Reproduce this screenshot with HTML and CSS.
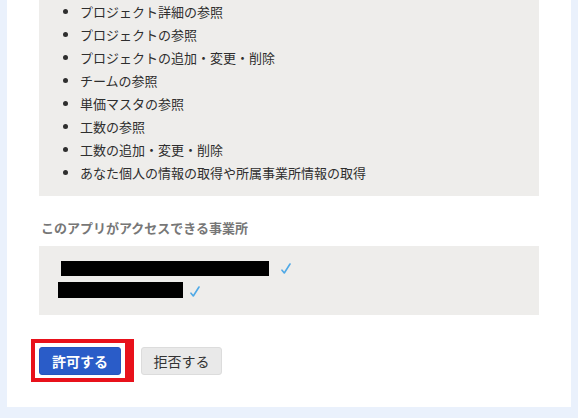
FILE: index.html
```html
<!DOCTYPE html>
<html lang="ja">
<head>
<meta charset="utf-8">
<link rel="stylesheet" href="styles.css">
</head>
<body>
<div class="card">
  <div class="scope-box">
    <ul class="scope-list">
      <li>プロジェクト詳細の参照</li>
      <li>プロジェクトの参照</li>
      <li>プロジェクトの追加・変更・削除</li>
      <li>チームの参照</li>
      <li>単価マスタの参照</li>
      <li>工数の参照</li>
      <li>工数の追加・変更・削除</li>
      <li>あなた個人の情報の取得や所属事業所情報の取得</li>
    </ul>
  </div>
  <h3 class="section-title">このアプリがアクセスできる事業所</h3>
  <div class="office-box">
    <div class="office-row row-a">
      <span class="redact redact-a"></span>
      <svg class="check check-a" width="10" height="11" viewBox="0 0 10 11"><path d="M1 7.2 L3.3 10 L9 1" fill="none" stroke="#4fa9e6" stroke-width="1.6" stroke-linecap="round" stroke-linejoin="round"/></svg>
    </div>
    <div class="office-row row-b">
      <span class="redact redact-b"></span>
      <svg class="check check-b" width="10" height="11" viewBox="0 0 10 11"><path d="M1 7.2 L3.3 10 L9 1" fill="none" stroke="#4fa9e6" stroke-width="1.6" stroke-linecap="round" stroke-linejoin="round"/></svg>
    </div>
  </div>
  <div class="actions">
    <div class="highlight">
      <button class="btn btn-primary">許可する</button>
    </div>
    <button class="btn btn-secondary">拒否する</button>
  </div>
</div>
</body>
</html>
```

FILE: styles.css
```css
html, body {
  margin: 0;
  padding: 0;
}
body {
  background: #eaf1fc;
  font-family: "Noto Sans CJK JP", "Noto Sans", sans-serif;
  font-size: 13px;
  color: #2e2e2e;
  height: 418px;
  overflow: hidden;
}
.card {
  margin-left: 7px;
  width: 500px;
  background: #fff;
  padding: 0 32px 25px 32px;
}
.scope-box {
  background: #eeedeb;
  padding: 1px 0 12px 0;
}
.scope-list {
  margin: -1px 0 0 0;
  padding: 0 0 0 41px;
  list-style: disc;
}
.scope-list li {
  line-height: 23px;
  height: 23px;
}
.section-title {
  margin: 22px 0 8px 2px;
  font-size: 13px;
  line-height: 20px;
  font-weight: bold;
  color: #777;
}
.office-box {
  background: #eeedeb;
  padding: 12px 0 15px 0;
}
.office-row {
  display: flex;
  align-items: center;
  height: 21px;
}
.redact {
  display: inline-block;
  background: #000;
}
.redact-a {
  width: 208px;
  height: 15px;
  margin-left: 22px;
}
.redact-b {
  width: 125px;
  height: 16px;
  margin-left: 19px;
}
.check {
  display: block;
}
.check-a {
  margin-left: 12px;
}
.check-b {
  margin-left: 7px;
  margin-top: 3px;
}
.actions {
  display: flex;
  align-items: center;
  margin-top: 24px;
}
.highlight {
  margin-left: -8px;
  border: 4px solid #e8111b;
  border-right-width: 9px;
  padding: 4px 4px 3px 4px;
  display: flex;
}
.btn {
  font-family: "Noto Sans CJK JP", "Noto Sans", sans-serif;
  font-size: 14px;
  height: 28px;
  border-radius: 3px;
  padding: 0;
  cursor: pointer;
}
.btn-primary {
  width: 82px;
  background: #2a5cc8;
  border: 1px solid #2655bd;
  color: #fff;
  font-weight: bold;
}
.btn-secondary {
  width: 81px;
  margin-left: 7px;
  background: #e9e9e9;
  border: 1px solid #dcdcdc;
  color: #333;
}
```
